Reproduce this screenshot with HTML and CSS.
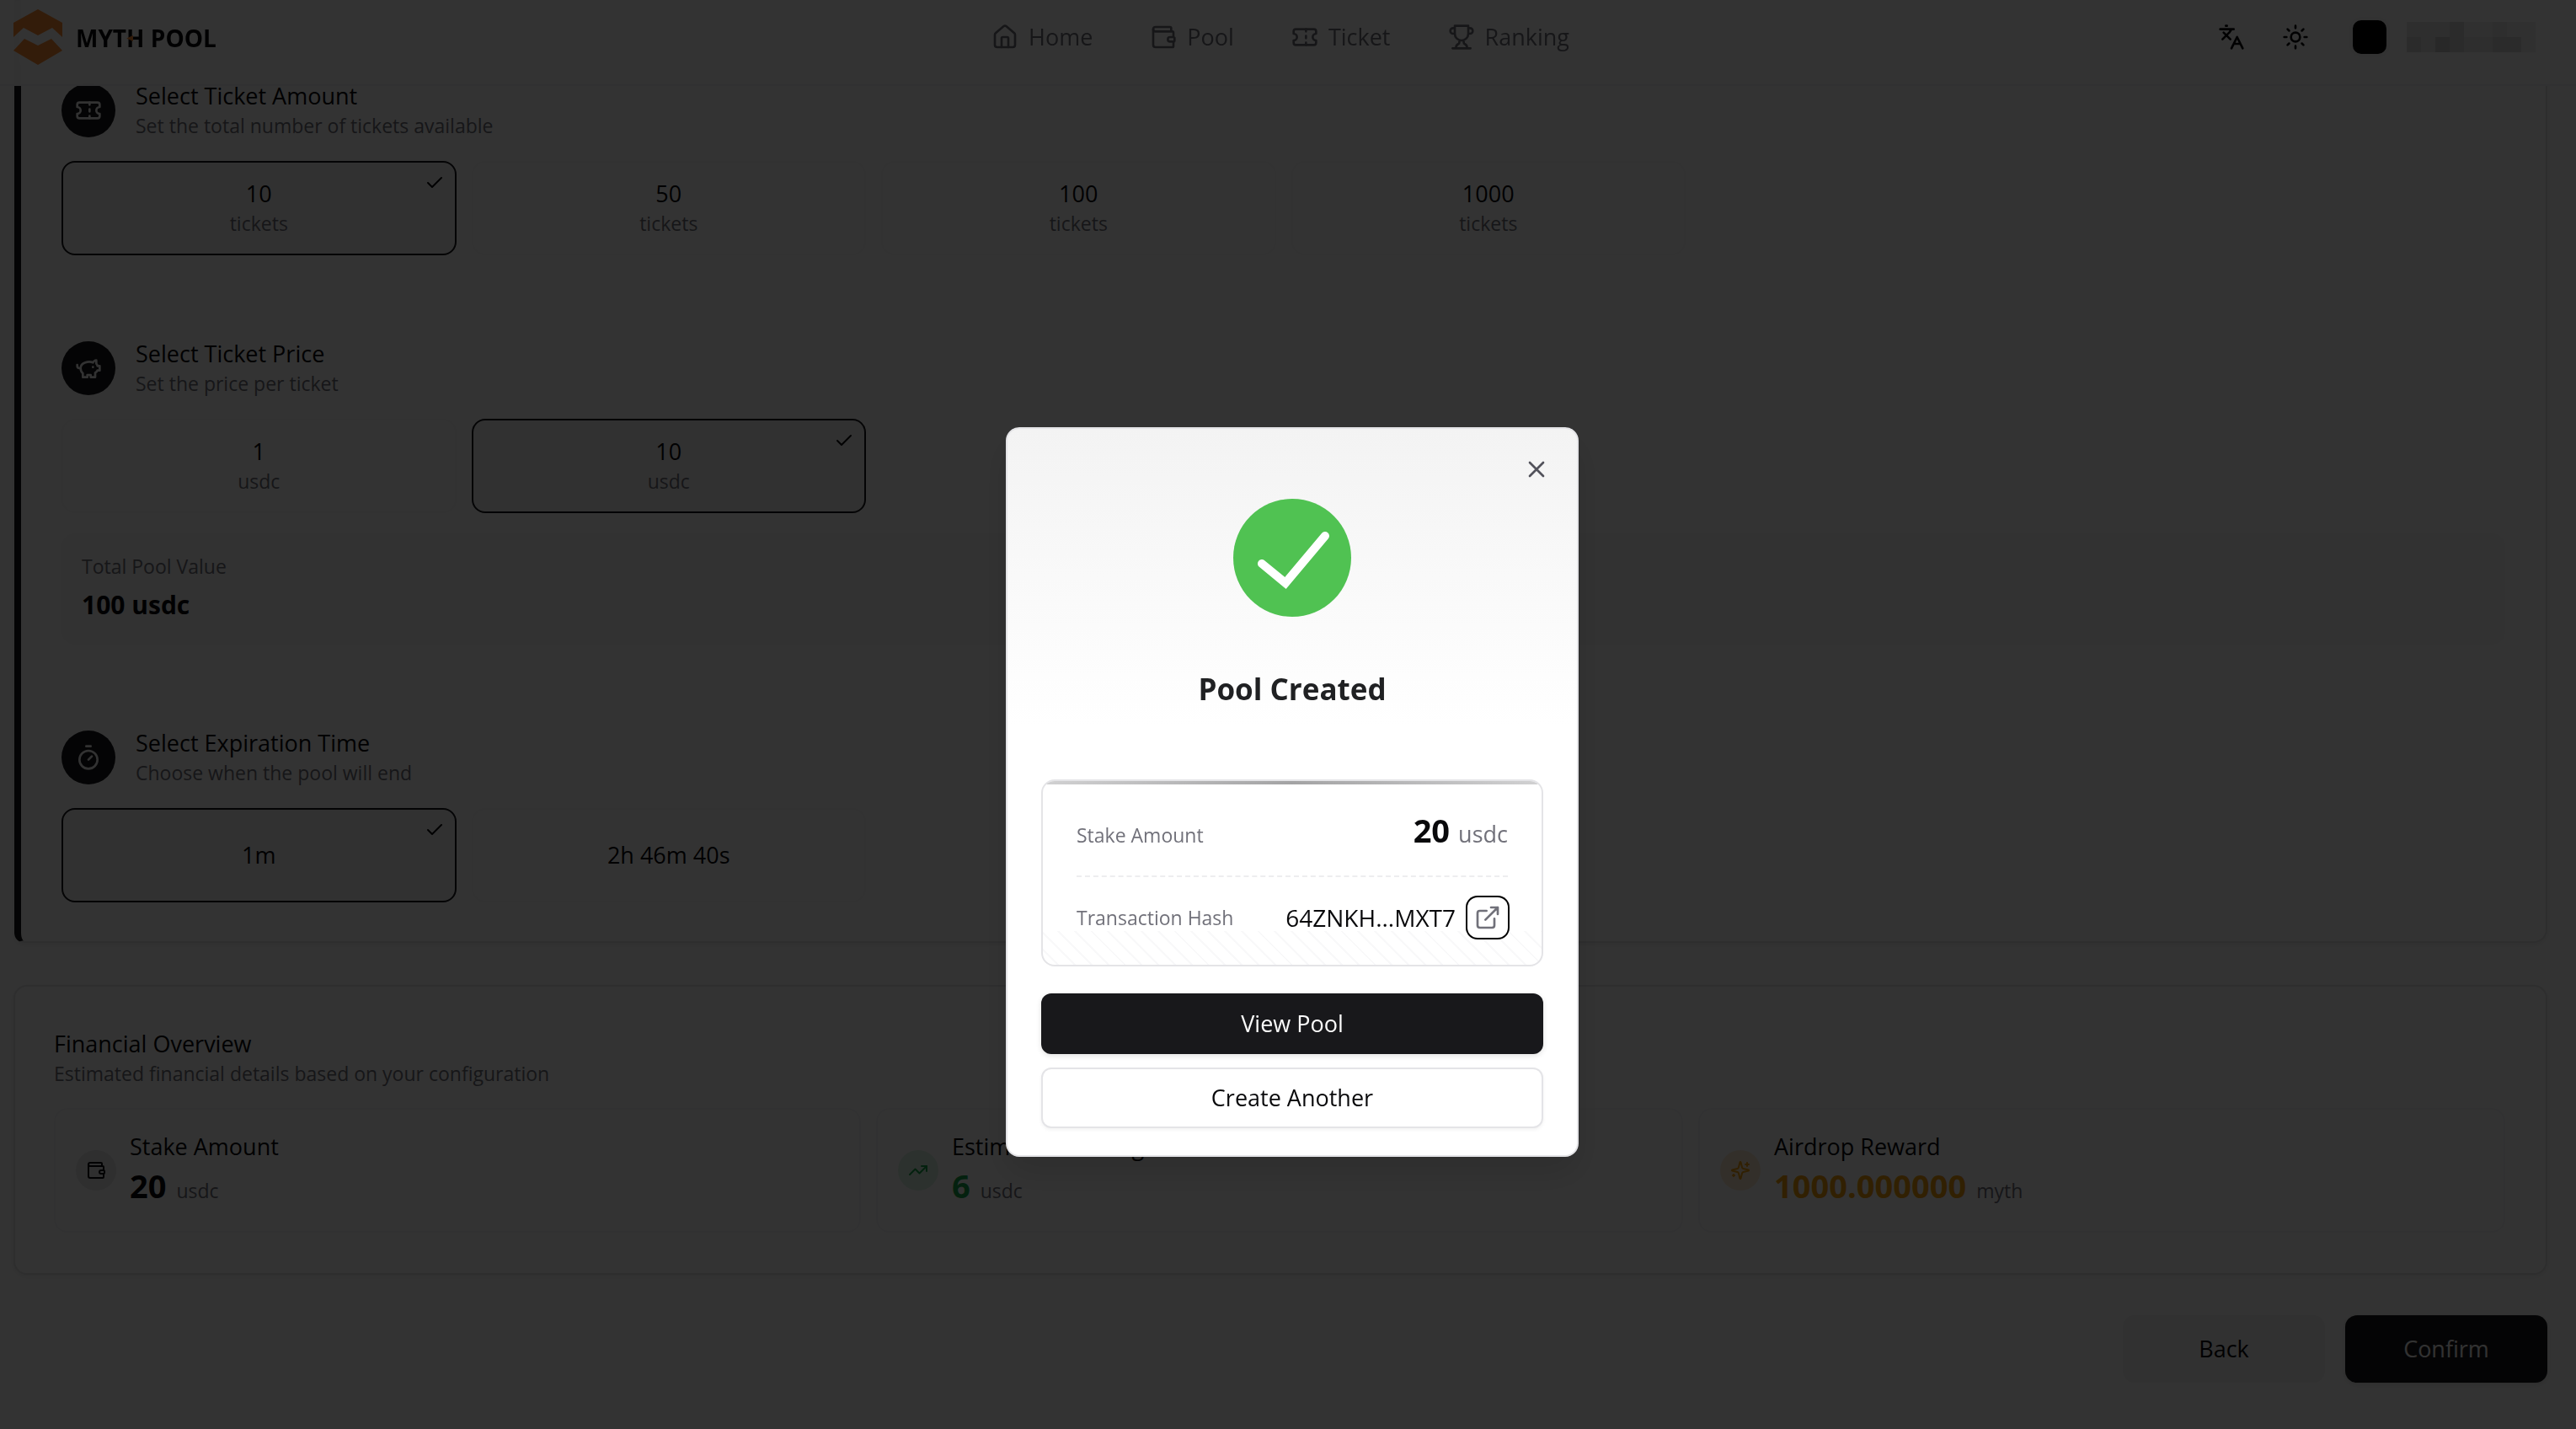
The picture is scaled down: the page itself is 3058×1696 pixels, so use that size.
FILE: index.html
```html
<!DOCTYPE html>
<html lang="en">
<head>
<meta charset="utf-8">
<meta name="viewport" content="width=device-width, initial-scale=1">
<title>Myth Pool</title>
<link rel="stylesheet" href="styles.css">
</head>
<body>
<svg class="sprite" aria-hidden="true">
  <symbol id="i-home" viewBox="0 0 24 24"><path d="M15 21v-8a1 1 0 0 0-1-1h-4a1 1 0 0 0-1 1v8"/><path d="M3 10a2 2 0 0 1 .709-1.528l7-5.999a2 2 0 0 1 2.582 0l7 5.999A2 2 0 0 1 21 10v9a2 2 0 0 1-2 2H5a2 2 0 0 1-2-2z"/></symbol>
  <symbol id="i-wallet" viewBox="0 0 24 24"><path d="M19 7V4a1 1 0 0 0-1-1H5a2 2 0 0 0 0 4h15a1 1 0 0 1 1 1v4h-3a2 2 0 0 0 0 4h3a1 1 0 0 0 1-1v-2a1 1 0 0 0-1-1"/><path d="M3 5v14a2 2 0 0 0 2 2h15a1 1 0 0 0 1-1v-4"/></symbol>
  <symbol id="i-ticket" viewBox="0 0 24 24"><path d="M2 9a3 3 0 0 1 0 6v2a2 2 0 0 0 2 2h16a2 2 0 0 0 2-2v-2a3 3 0 0 1 0-6V7a2 2 0 0 0-2-2H4a2 2 0 0 0-2 2Z"/><path d="M13 5v2M13 17v2M13 11v2"/></symbol>
  <symbol id="i-trophy" viewBox="0 0 24 24"><path d="M6 9H4.500a2.500 2.500 0 0 1 0-5H6M18 9h1.500a2.500 2.500 0 0 0 0-5H18M4 22h16M10 14.660V17c0 .55-.47.98-.97 1.210C7.850 18.750 7 20.240 7 22M14 14.660V17c0 .55.47.98.97 1.210C16.150 18.750 17 20.240 17 22M18 2H6v7a6 6 0 0 0 12 0V2Z"/></symbol>
  <symbol id="i-lang" viewBox="0 0 24 24"><path d="m5 8 6 6M4 14l6-6 2-3M2 5h12M7 2h1M22 22l-5-10-5 10M14 18h6"/></symbol>
  <symbol id="i-sun" viewBox="0 0 24 24"><circle cx="12" cy="12" r="4"/><path d="M12 2v2M12 20v2M4.930 4.930l1.410 1.410M17.660 17.660l1.410 1.410M2 12h2M20 12h2M6.340 17.660l-1.410 1.410M19.070 4.930l-1.410 1.410"/></symbol>
  <symbol id="i-piggy" viewBox="0 0 24 24"><path d="M19 5c-1.500 0-2.800 1.400-3 2-3.500-1.500-11-.3-11 5 0 1.800 0 3 2 4.500V20h4v-2h3v2h4v-4c1-.5 1.700-1 2-2h2v-4h-2c0-1-.5-1.500-1-2V5z"/><path d="M2 9v1c0 1.100.9 2 2 2h1M16 11h.01"/></symbol>
  <symbol id="i-timer" viewBox="0 0 24 24"><path d="M10 2h4M12 14l3-3"/><circle cx="12" cy="14" r="8"/></symbol>
  <symbol id="i-check" viewBox="0 0 24 24"><path d="M20 6 9 17l-5-5"/></symbol>
  <symbol id="i-trend" viewBox="0 0 24 24"><path d="m22 7-8.500 8.500-5-5L2 17"/><path d="M16 7h6v6"/></symbol>
  <symbol id="i-spark" viewBox="0 0 24 24"><path d="M9.940 15.500A2 2 0 0 0 8.500 14.060l-6.140-1.580a.5.5 0 0 1 0-.96L8.500 9.940A2 2 0 0 0 9.940 8.500l1.580-6.140a.5.5 0 0 1 .96 0l1.580 6.140a2 2 0 0 0 1.440 1.440l6.140 1.580a.5.5 0 0 1 0 .96l-6.140 1.580a2 2 0 0 0-1.440 1.440l-1.580 6.140a.5.5 0 0 1-.96 0z"/><path d="M20 3v4M22 5h-4M4 17v2M5 18H3"/></symbol>
  <symbol id="i-x" viewBox="0 0 24 24"><path d="M18 6 6 18M6 6l12 12"/></symbol>
  <symbol id="i-link" viewBox="0 0 24 24"><path d="M15 3h6v6M10 14 21 3M18 13v6a2 2 0 0 1-2 2H5a2 2 0 0 1-2-2V8a2 2 0 0 1 2-2h6"/></symbol>
</svg>

<header class="topbar">
  <a class="brand" href="#">
    <svg class="logo" viewBox="0 0 58 66" aria-hidden="true"><path d="M29 0 58 16V33L46 22 29 31 12 22 0 33V16ZM13 35 29 43 45 35 58 49 29 66 0 49Z"/></svg>
    <span>MYT<span class="brand-h">H</span> POOL</span>
  </a>
  <nav class="nav">
    <a href="#"><svg class="icon"><use href="#i-home"/></svg>Home</a>
    <a href="#"><svg class="icon"><use href="#i-wallet"/></svg>Pool</a>
    <a href="#"><svg class="icon"><use href="#i-ticket"/></svg>Ticket</a>
    <a href="#"><svg class="icon"><use href="#i-trophy"/></svg>Ranking</a>
  </nav>
  <div class="tools">
    <button class="tool" aria-label="Language"><svg class="icon"><use href="#i-lang"/></svg></button>
    <button class="tool" aria-label="Theme"><svg class="icon"><use href="#i-sun"/></svg></button>
    <button class="account" aria-label="Account">
      <span class="avatar"></span>
      <span class="masked"><i class="m2"></i><i class="m2"></i><i class="m2"></i><i class="m3"></i><i class="m1"></i><i class="m1"></i><i class="m2"></i><i class="m1"></i><i class="m1"></i><i class="m3"></i><i class="m2"></i><i class="m4"></i><i class="m3"></i><i class="m2"></i><i class="m2"></i><i class="m3"></i><i class="m3"></i><i class="m1"></i></span>
    </button>
  </div>
</header>

<main>
  <section class="card config">
    <div class="options tail"><div></div><div class="tail-chosen"></div></div>

    <div class="step">
      <div class="step-head">
        <span class="badge"><svg class="icon"><use href="#i-ticket"/></svg></span>
        <div><h2>Select Ticket Amount</h2><p class="muted">Set the total number of tickets available</p></div>
      </div>
      <div class="options">
        <button class="option chosen" aria-pressed="true"><span>10</span><span class="muted">tickets</span><svg class="icon tick"><use href="#i-check"/></svg></button>
        <button class="option"><span>50</span><span class="muted">tickets</span></button>
        <button class="option"><span>100</span><span class="muted">tickets</span></button>
        <button class="option"><span>1000</span><span class="muted">tickets</span></button>
      </div>
    </div>

    <div class="step">
      <div class="step-head">
        <span class="badge"><svg class="icon"><use href="#i-piggy"/></svg></span>
        <div><h2>Select Ticket Price</h2><p class="muted">Set the price per ticket</p></div>
      </div>
      <div class="options">
        <button class="option"><span>1</span><span class="muted">usdc</span></button>
        <button class="option chosen" aria-pressed="true"><span>10</span><span class="muted">usdc</span><svg class="icon tick"><use href="#i-check"/></svg></button>
      </div>
      <div class="total"><p class="muted">Total Pool Value</p><p class="total-value">100 usdc</p></div>
    </div>

    <div class="step">
      <div class="step-head">
        <span class="badge"><svg class="icon"><use href="#i-timer"/></svg></span>
        <div><h2>Select Expiration Time</h2><p class="muted">Choose when the pool will end</p></div>
      </div>
      <div class="options">
        <button class="option chosen" aria-pressed="true"><span>1m</span><svg class="icon tick"><use href="#i-check"/></svg></button>
        <button class="option"><span>2h 46m 40s</span></button>
      </div>
    </div>
  </section>

  <section class="card finance">
    <h2>Financial Overview</h2>
    <p class="muted">Estimated financial details based on your configuration</p>
    <div class="tiles">
      <div class="tile">
        <span class="dot"><svg class="icon"><use href="#i-wallet"/></svg></span>
        <div><h3>Stake Amount</h3><p class="figure"><b>20</b><span class="muted">usdc</span></p></div>
      </div>
      <div class="tile green">
        <span class="dot"><svg class="icon"><use href="#i-trend"/></svg></span>
        <div><h3>Estimated Earnings</h3><p class="figure"><b>6</b><span class="muted">usdc</span></p></div>
      </div>
      <div class="tile amber">
        <span class="dot"><svg class="icon"><use href="#i-spark"/></svg></span>
        <div><h3>Airdrop Reward</h3><p class="figure"><b>1000.000000</b><span class="muted">myth</span></p></div>
      </div>
    </div>
  </section>

  <div class="actions">
    <button class="btn secondary">Back</button>
    <button class="btn primary">Confirm</button>
  </div>
</main>

<div class="overlay">
  <div class="modal" role="dialog" aria-modal="true" aria-labelledby="modal-title">
    <button class="close" aria-label="Close"><svg class="icon"><use href="#i-x"/></svg></button>
    <svg class="success" viewBox="0 0 140 140" aria-hidden="true"><circle cx="70" cy="70" r="70"/><path d="M34 77 62 100 109 44"/></svg>
    <h1 id="modal-title">Pool Created</h1>
    <div class="receipt">
      <div class="row stake"><span class="muted">Stake Amount</span><span class="amount"><b>20</b><span>usdc</span></span></div>
      <div class="row hash"><span class="muted">Transaction Hash</span><span class="hash-value">64ZNKH...MXT7<a class="open" href="#" aria-label="Open transaction"><svg class="icon"><use href="#i-link"/></svg></a></span></div>
    </div>
    <div class="modal-actions">
      <button class="wide primary">View Pool</button>
      <button class="wide outline">Create Another</button>
    </div>
  </div>
</div>
</body>
</html>
```
FILE: styles.css
```css
* { box-sizing: border-box; margin: 0; padding: 0; }

:root {
  --ink: #09090b;
  --dark: #18181b;
  --muted: #71717a;
  --line: #e4e4e7;
  --soft: #f4f4f5;
}

body {
  padding-right: 18px;
  background: #fff;
  color: var(--ink);
  font: 400 27px/36px "Open Sans", "Noto Sans", sans-serif;
  overflow: hidden;
}

button { border: 0; background: none; color: inherit; font: inherit; cursor: pointer; }
a { color: inherit; text-decoration: none; }
h1, h2, h3 { font-weight: 400; font-size: 27px; line-height: 36px; }
.sprite { position: absolute; width: 0; height: 0; }
.icon { display: block; flex: none; width: 32px; height: 32px; fill: none; stroke: currentColor; stroke-width: 2; stroke-linecap: round; stroke-linejoin: round; }
.muted { color: var(--muted); font-size: 23px; line-height: 34px; }

/* Top bar */
.topbar {
  position: sticky;
  top: 0;
  z-index: 2;
  display: grid;
  grid-template-columns: 1fr auto 1fr;
  align-items: center;
  height: 102px;
  margin-right: -18px;
  padding: 0 34px 12px 16px;
  border-bottom: 2px solid #f6f6f7;
  background: rgba(255, 255, 255, .94);
  backdrop-filter: blur(14px);
}
.brand { display: flex; align-items: center; gap: 16px; font-size: 28px; font-weight: 700; }
.logo { width: 58px; height: 66px; fill: #ff8c33; }
.brand span { padding-top: 2px; }
.brand-h { position: relative; }
.brand-h::after {
  content: "";
  position: absolute;
  left: 0;
  top: 18px;
  width: 8px;
  height: 7px;
  background: #ff8c33;
  clip-path: polygon(0 50%, 100% 0, 100% 100%);
}
.nav { display: flex; gap: 68px; color: var(--muted); }
.nav a { display: flex; align-items: center; gap: 12px; }
.tools { display: flex; justify-content: flex-end; align-items: center; gap: 44px; padding-right: 14px; }
.account { display: flex; align-items: center; gap: 20px; margin-left: 4px; }
.avatar { width: 48px; height: 48px; border: 4px solid #fafafa; border-radius: 14px; background: #000; }
.masked { display: grid; grid-template-columns: repeat(9, 17px); grid-auto-rows: 18px; }
.m1 { background: #eee; }
.m2 { background: #e4e4e4; }
.m3 { background: #d8d8d8; }
.m4 { background: #c8c8c8; }

/* Page */
main { margin-top: -102px; padding: 0 16px 56px; }
.card { border: 2px solid var(--line); border-radius: 16px; background: #fff; box-shadow: 0 2px 6px rgba(0, 0, 0, .08); }
.config {
  margin-left: 1px;
  padding: 0 48px 46px;
  border-top: 0;
  border-left: 8px solid var(--dark);
  border-radius: 0 0 16px 12px;
}
.tail { height: 20px; margin-bottom: 76px; }
.tail-chosen { border-radius: 0 0 16px 16px; background: #d4d4d8; }
.step + .step { margin-top: 99px; }
.step-head { display: flex; align-items: center; gap: 24px; margin-bottom: 25px; }
.badge { display: grid; place-items: center; width: 64px; height: 64px; border-radius: 50%; background: var(--dark); color: #fafafa; }
.options { display: grid; grid-template-columns: repeat(6, 1fr); gap: 18px; }
.option {
  position: relative;
  display: flex;
  flex-direction: column;
  align-items: center;
  justify-content: center;
  min-height: 112px;
  border: 2px solid #f7f7f8;
  border-radius: 16px;
}
.option.chosen { border-color: var(--dark); background: var(--soft); }
.tick { position: absolute; top: 12px; right: 12px; width: 24px; height: 24px; }
.total { margin-top: 24px; padding: 24px; border-radius: 16px; background: #f7f7f8; }
.total .muted { line-height: 30px; }
.total-value { margin-top: 8px; font-size: 30px; font-weight: 700; line-height: 46px; }

.finance { margin-top: 50px; padding: 50px 48px 48px 46px; }
.tiles { display: grid; grid-template-columns: repeat(3, 1fr); gap: 18px; margin-top: 24px; }
.tile { display: flex; align-items: center; gap: 16px; padding: 26px 24px; border: 2px solid #f6f6f7; border-radius: 16px; }
.dot { display: grid; place-items: center; width: 48px; height: 48px; border-radius: 50%; background: #e8e8ea; }
.dot .icon { width: 24px; height: 24px; }
.figure { display: flex; align-items: baseline; gap: 12px; line-height: 56px; }
.figure b { font-size: 38px; font-weight: 700; }
.green .dot { background: #dcf5e5; color: #16a34a; }
.green b { color: #16a34a; }
.amber .dot { background: #fdecd2; color: #f59e0b; }
.amber b { color: #f59e0b; }

.actions { display: flex; justify-content: flex-end; gap: 24px; margin-top: 48px; }
.btn { width: 240px; height: 80px; border-radius: 14px; }
.primary { background: var(--dark); color: #fafafa; box-shadow: 0 2px 6px rgba(0, 0, 0, .12); }
.secondary { background: var(--soft); }

/* Dialog */
.overlay {
  position: fixed;
  inset: 0;
  z-index: 10;
  display: flex;
  align-items: center;
  justify-content: center;
  padding: 184px 0 0 10px;
  background: rgba(0, 0, 0, .8);
}
.modal {
  position: relative;
  display: flex;
  flex-direction: column;
  align-items: center;
  width: 680px;
  padding: 83px 40px 32px;
  border: 2px solid var(--line);
  border-radius: 16px;
  background: linear-gradient(#f3f3f3, #fff 352px);
  box-shadow: 0 20px 40px rgba(0, 0, 0, .12);
}
.close { position: absolute; top: 32px; right: 32px; color: #52525b; }
.success { width: 140px; height: 140px; fill: #50c252; }
.success path { fill: none; stroke: #fff; stroke-width: 10; stroke-linecap: round; }
.modal h1 { margin-top: 62px; color: #202123; font-size: 35px; font-weight: 700; line-height: 48px; }
.receipt {
  position: relative;
  align-self: stretch;
  margin-top: 83px;
  padding: 32px 40px;
  border: 2px solid var(--line);
  border-radius: 16px;
  background: repeating-linear-gradient(45deg, transparent 0 12px, #f8f8f9 12px 14px) bottom / 100% 40px no-repeat #fff;
  overflow: hidden;
}
.receipt::before {
  content: "";
  position: absolute;
  inset: 0 0 auto;
  height: 4px;
  background: linear-gradient(90deg, #d1d1d2, #a3a3a4, #d1d1d2);
}
.row { display: flex; justify-content: space-between; }
.stake { align-items: baseline; padding-bottom: 28px; border-bottom: 2px dashed #ededef; }
.amount { display: flex; align-items: baseline; gap: 10px; color: var(--muted); line-height: 36px; }
.amount b { color: var(--ink); font-size: 38px; font-weight: 700; line-height: 52px; }
.hash { align-items: center; margin-top: 24px; }
.hash-value { display: flex; align-items: center; gap: 14px; font-size: 28px; }
.open { display: grid; place-items: center; width: 48px; height: 48px; border-radius: 12px; background: #fff; color: var(--muted); box-shadow: 0 0 0 2px #000; }
.modal-actions { display: grid; gap: 16px; align-self: stretch; margin-top: 32px; }
.wide { height: 72px; border-radius: 12px; }
.outline { border: 2px solid var(--line); background: #fff; box-shadow: 0 2px 4px rgba(0, 0, 0, .05); }
```
